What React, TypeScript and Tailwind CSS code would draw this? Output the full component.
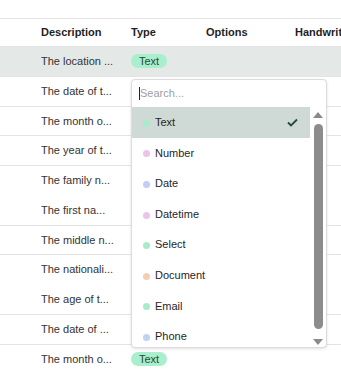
import React from "react";

const rows = [
  { d: "The location ...", b: true, hl: true, badge: true },
  { d: "The date of t...", b: true },
  { d: "The month o...", b: true },
  { d: "The year of t...", b: true },
  { d: "The family n...", b: false },
  { d: "The first na...", b: true },
  { d: "The middle n...", b: true },
  { d: "The nationali...", b: false },
  { d: "The age of t...", b: true },
  { d: "The date of ...", b: true },
  { d: "The month o...", b: true, badge: true },
];

const items = [
  { t: "Text", c: "bg-[#a7ebc9]", sel: true },
  { t: "Number", c: "bg-[#ecc3ea]" },
  { t: "Date", c: "bg-[#c3cdf5]" },
  { t: "Datetime", c: "bg-[#ecc3ea]" },
  { t: "Select", c: "bg-[#a7ebc9]" },
  { t: "Document", c: "bg-[#f5cdb4]" },
  { t: "Email", c: "bg-[#a7ebc9]" },
  { t: "Phone", c: "bg-[#bcd3f5]" },
];

export default function App() {
  return (
    <div
      className="relative w-[341px] h-[370px] overflow-hidden bg-white text-[11px] text-[#333]"
      style={{ fontFamily: '"Liberation Sans", Arial, sans-serif' }}
    >
      <div className="h-[18px]" />
      <div className="w-[420px] border-t border-[#e3e3e3]">
        <div className="grid grid-cols-[41px_90px_75px_89px_1fr] h-[28px] items-center border-b border-[#e3e3e3] font-bold text-[#1f1f1f]">
          <div />
          <div>Description</div>
          <div>Type</div>
          <div>Options</div>
          <div>Handwriting</div>
        </div>
        {rows.map((r, i) => (
          <div
            key={i}
            className={`grid grid-cols-[41px_90px_75px_89px_1fr] h-[29.75px] items-center border-b ${
              r.b ? "border-[#e3e3e3]" : "border-transparent"
            } ${r.hl ? "bg-[#e4e9e7]" : ""}`}
          >
            <div />
            <div className="truncate">{r.d}</div>
            <div>
              {r.badge && (
                <span className="inline-flex items-center h-[14px] px-[8px] rounded-full bg-[#a9efcd] text-[#1e4d3a]">
                  Text
                </span>
              )}
            </div>
            <div />
            <div />
          </div>
        ))}
      </div>

      <div className="absolute left-[131px] top-[79px] w-[196px] h-[269px] bg-white border border-[#dcdcdc] rounded-[4px] shadow-[0_1px_3px_rgba(0,0,0,0.12)] flex flex-col overflow-hidden">
        <div className="h-[27px] flex items-center pl-[7px] shrink-0">
          <div className="w-px h-[13px] bg-[#222]" />
          <span className="text-[#a0a0a0]">Search...</span>
        </div>
        <div className="flex flex-1 min-h-0">
          <div className="w-[178px] flex flex-col overflow-hidden">
            {items.map((it) => (
              <div
                key={it.t}
                className={`h-[30.6px] shrink-0 flex items-center pl-[11px] pr-[12px] text-[#1f1f1f] ${
                  it.sel ? "bg-[#cfdad6]" : ""
                }`}
              >
                <span className={`w-[7px] h-[7px] rounded-full mt-[2px] ${it.c}`} />
                <span className="ml-[5px] flex-1">{it.t}</span>
                {it.sel && (
                  <svg width="11" height="9" viewBox="0 0 11 9" className="mt-[1px]">
                    <path d="M1 4.5 L4 7.5 L10 1.5" fill="none" stroke="#1f4d3a" strokeWidth="1.8" />
                  </svg>
                )}
              </div>
            ))}
          </div>
          <div className="flex-1 flex flex-col items-center pt-[5px] pb-[2px]">
            <svg width="10" height="6" viewBox="0 0 10 6">
              <path d="M5 0 L10 6 L0 6 Z" fill="#8a8a8a" />
            </svg>
            <div className="w-[9px] flex-1 mt-[6px] mb-[10px] rounded-full bg-[#8c8c8c]" />
            <svg width="10" height="6" viewBox="0 0 10 6">
              <path d="M0 0 L10 0 L5 6 Z" fill="#8a8a8a" />
            </svg>
          </div>
        </div>
      </div>
    </div>
  );
}
